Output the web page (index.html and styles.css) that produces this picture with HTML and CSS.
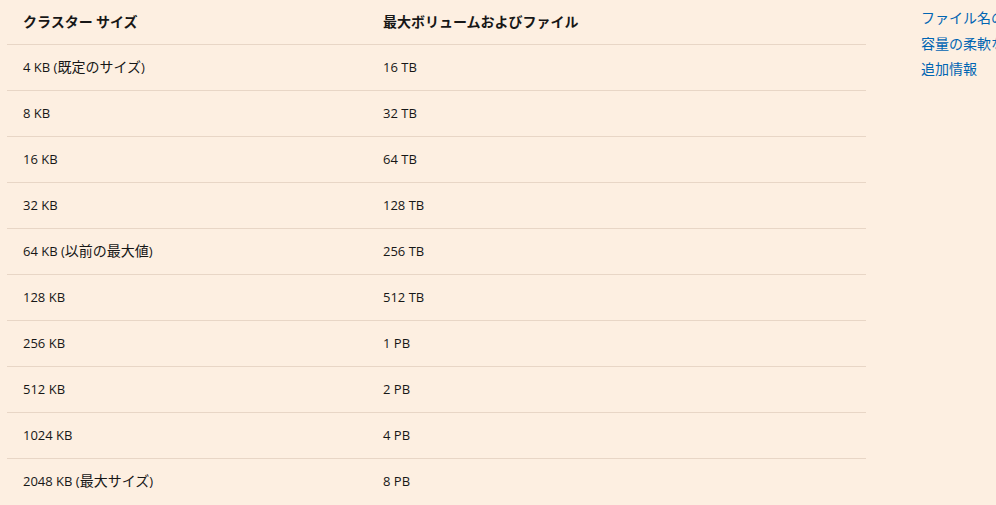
FILE: index.html
```html
<!DOCTYPE html>
<html lang="ja">
<head>
<meta charset="utf-8">
<link rel="stylesheet" href="styles.css">
</head>
<body>
<div class="page">
  <table class="spec">
    <colgroup><col class="col1"><col></colgroup>
    <thead>
      <tr><th><span class="ja">クラスター サイズ</span></th><th><span class="ja">最大ボリュームおよびファイル</span></th></tr>
    </thead>
    <tbody>
      <tr><td>4 KB (<span class="ja">既定のサイズ</span>)</td><td>16 TB</td></tr>
      <tr><td>8 KB</td><td>32 TB</td></tr>
      <tr><td>16 KB</td><td>64 TB</td></tr>
      <tr><td>32 KB</td><td>128 TB</td></tr>
      <tr><td>64 KB (<span class="ja">以前の最大値</span>)</td><td>256 TB</td></tr>
      <tr><td>128 KB</td><td>512 TB</td></tr>
      <tr><td>256 KB</td><td>1 PB</td></tr>
      <tr><td>512 KB</td><td>2 PB</td></tr>
      <tr><td>1024 KB</td><td>4 PB</td></tr>
      <tr><td>2048 KB (<span class="ja">最大サイズ</span>)</td><td>8 PB</td></tr>
    </tbody>
  </table>
  <nav class="toc">
    <a href="#">ファイル名の長さとパス</a>
    <a href="#">容量の柔軟な拡張</a>
    <a href="#">追加情報</a>
  </nav>
</div>
</body>
</html>
```
FILE: styles.css
```css
html, body {
  margin: 0;
  padding: 0;
  background: #fdefe1;
  overflow: hidden;
}
body {
  font-family: "Open Sans", "Noto Sans CJK JP", sans-serif;
  color: #171717;
}
.page {
  display: flex;
  align-items: flex-start;
  padding-left: 7px;
  gap: 55px;
  width: 1200px;
}
.spec {
  width: 859px;
  flex: none;
  table-layout: fixed;
  border-collapse: collapse;
  font-size: 13px;
}
.spec .col1 {
  width: 360px;
}
.spec th, .spec td {
  text-align: left;
  padding: 0 16px;
  border-bottom: 1px solid #e8d6c6;
  vertical-align: middle;
  white-space: nowrap;
  line-height: 18px;
}
.spec th {
  height: 43px;
  font-weight: 700;
  padding-bottom: 1px;
}
.spec td {
  height: 43px;
  padding-bottom: 2px;
}
.spec tbody tr:last-child td {
  border-bottom: none;
}
.ja {
  font-family: "Noto Sans CJK JP", sans-serif;
  font-size: 14px;
  line-height: 1;
}
.toc {
  display: flex;
  flex-direction: column;
  padding-top: 5px;
  font-family: "Noto Sans CJK JP", sans-serif;
  font-size: 14px;
  line-height: 25.5px;
  white-space: nowrap;
}
.toc a {
  color: #0065b3;
  text-decoration: none;
}
```
